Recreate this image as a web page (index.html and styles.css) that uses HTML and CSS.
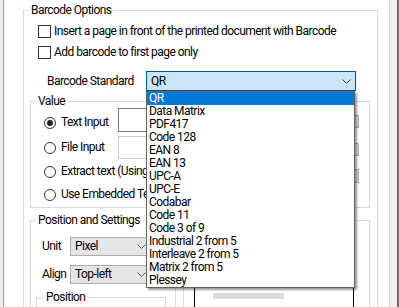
FILE: index.html
```html
<!DOCTYPE html>
<html lang="en">
<head>
    <meta charset="UTF-8">
    <title>Barcode Options</title>
    <link rel="stylesheet" href="styles.css">
</head>
<body>

    <div class="frame">
        <div class="tab-page">

            <!-- Barcode Options -->
            <fieldset class="group group-barcode">
                <legend>Barcode Options</legend>
                <div class="barcode-body">
                    <label class="check"><span class="check-box"></span>Insert a page in front of the printed document with Barcode</label>
                    <label class="check"><span class="check-box"></span>Add barcode to first page only</label>

                    <div class="standard-row">
                        <span class="standard-label">Barcode Standard</span>
                        <div class="combo combo-open">
                            <span class="combo-text">QR</span>
                            <svg class="chevron" width="9" height="5" viewBox="0 0 9 5"><polyline points="0.5,0.5 4.5,4.5 8.5,0.5" fill="none" stroke="#404040" stroke-width="1"/></svg>
                            <ul class="combo-list">
                                <li class="selected">QR</li>
                                <li>Data Matrix</li>
                                <li>PDF417</li>
                                <li>Code 128</li>
                                <li>EAN 8</li>
                                <li>EAN 13</li>
                                <li>UPC-A</li>
                                <li>UPC-E</li>
                                <li>Codabar</li>
                                <li>Code 11</li>
                                <li>Code 3 of 9</li>
                                <li>Industrial 2 from 5</li>
                                <li>Interleave 2 from 5</li>
                                <li>Matrix 2 from 5</li>
                                <li>Plessey</li>
                            </ul>
                        </div>
                    </div>

                    <!-- Value -->
                    <fieldset class="group group-value">
                        <legend>Value</legend>
                        <div class="value-body">
                            <div class="value-row row-text">
                                <label class="radio"><span class="radio-dot checked"></span>Text Input</label>
                                <div class="textbox"></div>
                                <div class="small-button"></div>
                            </div>
                            <div class="value-row row-file">
                                <label class="radio"><span class="radio-dot"></span>File Input</label>
                                <div class="textbox disabled"></div>
                                <div class="small-button"></div>
                            </div>
                            <div class="value-row row-extract">
                                <label class="radio wide"><span class="radio-dot"></span>Extract text (Using OCR)</label>
                                <div class="small-button"></div>
                            </div>
                            <div class="value-row row-embedded">
                                <label class="radio wide"><span class="radio-dot"></span>Use Embedded Text</label>
                            </div>
                        </div>
                    </fieldset>

                    <div class="settings-row">
                        <!-- Position and Settings -->
                        <fieldset class="group group-settings">
                            <legend>Position and Settings</legend>
                            <div class="settings-body">
                                <div class="select-row row-unit">
                                    <span class="select-label">Unit</span>
                                    <div class="combo combo-plain">
                                        <span class="combo-text">Pixel</span>
                                        <svg class="chevron" width="9" height="5" viewBox="0 0 9 5"><polyline points="0.5,0.5 4.5,4.5 8.5,0.5" fill="none" stroke="#606060" stroke-width="1"/></svg>
                                    </div>
                                </div>
                                <div class="select-row row-align">
                                    <span class="select-label">Align</span>
                                    <div class="combo combo-plain">
                                        <span class="combo-text">Top-left</span>
                                        <svg class="chevron" width="9" height="5" viewBox="0 0 9 5"><polyline points="0.5,0.5 4.5,4.5 8.5,0.5" fill="none" stroke="#606060" stroke-width="1"/></svg>
                                    </div>
                                </div>
                                <fieldset class="group group-position">
                                    <legend>Position</legend>
                                    <div class="position-body"></div>
                                </fieldset>
                            </div>
                        </fieldset>

                        <!-- Preview -->
                        <fieldset class="group group-preview">
                            <legend></legend>
                            <div class="preview-body">
                                <div class="preview-box">
                                    <div class="preview-bar"></div>
                                </div>
                            </div>
                        </fieldset>
                    </div>
                </div>
            </fieldset>

        </div>
        <div class="frame-edge"></div>
    </div>

</body>
</html>
```

FILE: styles.css
```css
/* General Styles */
body {
    margin: 0;
    background: #f0f0f0;
    font-family: Roboto, "Liberation Sans", Arial, sans-serif;
    font-size: 12px;
    line-height: 13px;
    letter-spacing: -0.55px;
    color: #000;
    overflow: hidden;
    white-space: nowrap;
}

.frame {
    display: flex;
    height: 307px;
    overflow: hidden;
}

.tab-page {
    margin-left: 3px;
    width: 385px;
    border-left: 1px solid #a0a0a0;
    background: #fff;
    padding-top: 4px;
}

.frame-edge {
    width: 7px;
    border-left: 1px solid #d9d9d9;
    border-right: 2px solid #6b6b6b;
    background: #f0f0f0;
}

/* Group Boxes */
.group {
    margin: 0;
    padding: 0;
    min-width: 0;
    border: 1px solid #dcdcdc;
}

.group legend {
    margin-left: 5px;
    padding: 0 2px;
    line-height: 13px;
    height: 13px;
}

.group-barcode {
    margin-left: 19px;
    width: 355px;
    height: 340px;
    box-sizing: border-box;
}

.barcode-body {
    padding: 4px 0 0 6px;
}

/* Checkboxes */
.check {
    display: flex;
    align-items: center;
    gap: 3px;
    height: 21px;
    padding-left: 8px;
}

.check-box {
    flex-shrink: 0;
    width: 11px;
    height: 11px;
    border: 1px solid #333;
    background: #fff;
}

/* Barcode Standard */
.standard-row {
    display: flex;
    align-items: center;
    margin-top: 8px;
    padding-left: 17px;
    height: 20px;
    position: relative;
    z-index: 2;
}

.standard-label {
    width: 99px;
    flex-shrink: 0;
}

.combo {
    display: flex;
    align-items: center;
    flex-shrink: 0;
    box-sizing: border-box;
    position: relative;
}

.combo-open {
    width: 210px;
    height: 20px;
    padding-left: 4px;
    background: #cce4f7;
    border: 1px solid #005499;
}

.combo .chevron {
    margin-left: auto;
    margin-right: 4px;
}

.combo-list {
    position: absolute;
    top: 19px;
    left: -1px;
    width: 209px;
    margin: 0;
    padding: 0;
    list-style: none;
    background: #fff;
    border: 1px solid #646464;
    box-sizing: border-box;
    box-shadow: 2px 2px 2px rgba(0, 0, 0, 0.4);
}

.combo-list li {
    height: 13px;
    padding-left: 2px;
}

.combo-list li.selected {
    background: #0078d7;
    color: #fff;
}

/* Value */
.group-value {
    margin-top: 4px;
    width: 340px;
    box-sizing: border-box;
}

.value-body {
    padding: 0 10px 6px 13px;
}

.value-row {
    display: flex;
    align-items: flex-start;
}

.row-text { height: 24px; }
.row-file { height: 23px; margin-top: 4px; }
.row-extract { height: 24px; }
.row-embedded { height: 18px; }

.radio {
    display: flex;
    align-items: center;
    gap: 5px;
    width: 74px;
    flex-shrink: 0;
}

.radio.wide {
    width: auto;
    flex: 1;
}

.row-text .radio { margin-top: 8px; }
.row-file .radio { margin-top: 5px; }
.row-extract .radio { margin-top: 6px; }
.row-embedded .radio { margin-top: 5px; }

.radio-dot {
    flex-shrink: 0;
    width: 10px;
    height: 10px;
    border: 1px solid #333;
    border-radius: 50%;
    background: #fff;
    display: flex;
    align-items: center;
    justify-content: center;
}

.radio-dot.checked::after {
    content: "";
    width: 6px;
    height: 6px;
    border-radius: 50%;
    background: #222;
}

.textbox {
    flex: 1;
    height: 24px;
    box-sizing: border-box;
    border: 1px solid #7a7a7a;
    background: #fff;
}

.textbox.disabled {
    height: 23px;
    border-color: #cccccc;
}

.small-button {
    width: 40px;
    margin-left: 4px;
    height: 13px;
    box-sizing: border-box;
    border: 1px solid #adadad;
    background: #e1e1e1;
}

.row-text .small-button { margin-top: 7px; }
.row-file .small-button { margin-top: 7px; }
.row-extract .small-button { margin-top: 10px; height: 14px; }

/* Position and Settings */
.settings-row {
    display: flex;
    gap: 7px;
    margin-top: 6px;
    width: 340px;
}

.group-settings {
    width: 146px;
    height: 120px;
    box-sizing: border-box;
}

.settings-body {
    padding: 10px 0 0 5px;
}

.select-row {
    display: flex;
    align-items: center;
    height: 19px;
    padding-left: 6px;
}

.row-align {
    margin-top: 9px;
}

.select-label {
    width: 28px;
}

.combo-plain {
    width: 81px;
    height: 19px;
    padding-left: 4px;
    background: #e5e5e5;
    border: 1px solid #adadad;
}

.group-position {
    margin-top: 7px;
    width: 130px;
    height: 60px;
    box-sizing: border-box;
}

.group-position legend {
    margin-left: 7px;
}

/* Preview */
.group-preview {
    width: 187px;
    height: 120px;
    box-sizing: border-box;
}

.group-preview legend {
    padding: 0;
}

.preview-body {
    padding: 9px 0 0 10px;
}

.preview-box {
    width: 160px;
    height: 100px;
    box-sizing: border-box;
    border: 1px solid #000;
    background: #fff;
    padding: 56px 0 0 18px;
}

.preview-bar {
    width: 71px;
    height: 6px;
    background: #dcdcdc;
}
```
